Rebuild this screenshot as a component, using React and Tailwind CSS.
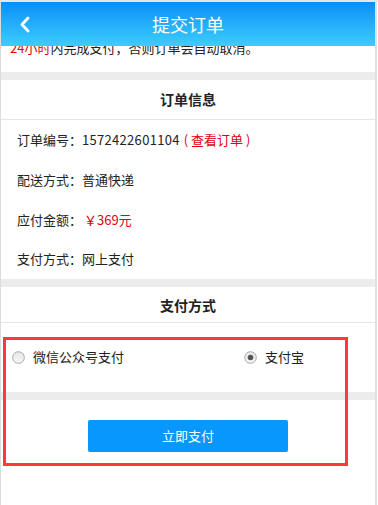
import React from "react";

const font = { fontFamily: '"Noto Sans CJK SC", "Noto Sans", sans-serif' };

function Radio({ checked }) {
  return (
    <svg width="13" height="13" viewBox="0 0 13 13" className="shrink-0">
      <defs>
        <linearGradient id={checked ? "rg1" : "rg0"} x1="0" y1="0" x2="0" y2="1">
          <stop offset="0" stopColor="#e6e6e6" />
          <stop offset="1" stopColor="#f8f8f8" />
        </linearGradient>
      </defs>
      <circle cx="6.5" cy="6.5" r="5.8" fill={`url(#${checked ? "rg1" : "rg0"})`} stroke="#a8a8a8" strokeWidth="1" />
      {checked && <circle cx="6.5" cy="6.5" r="2.8" fill="#555" />}
    </svg>
  );
}

export default function App() {
  return (
    <div
      className="relative w-[378px] h-[505px] overflow-hidden bg-white text-[13px] text-[#222]"
      style={font}
    >
      <div className="h-[2px] bg-[#e6e6e6]" />
      <div className="flex h-[503px] border-l border-[#dcdcdc]">
        <div className="flex-1 flex flex-col">
          {/* header */}
          <div className="relative h-[44px] flex items-center justify-center bg-gradient-to-b from-[#0a8ef6] to-[#3ccdfd]">
            <svg
              className="absolute left-[18px] top-[14px]"
              width="12"
              height="17"
              viewBox="0 0 12 17"
            >
              <polyline
                points="9,2 3,8.5 9,15"
                fill="none"
                stroke="#fff"
                strokeWidth="2.8"
                strokeLinecap="round"
                strokeLinejoin="round"
              />
            </svg>
            <span className="text-white text-[18px]">提交订单</span>
          </div>
          {/* notice (scrolled under header) */}
          <div className="h-[26px] overflow-hidden">
            <div className="mt-[-8px] pl-[9px] leading-[20px] whitespace-nowrap">
              <span className="text-[#e00010]">24小时</span>内完成支付，否则订单会自动取消。
            </div>
          </div>
          <div className="h-[8px] bg-[#ececec]" />
          {/* order info */}
          <div className="h-[40px] flex items-center justify-center font-bold text-[14px] border-b border-[#e6e6e6]">
            订单信息
          </div>
          <div className="flex flex-col pl-[16px]">
            <div className="h-[39.75px] flex items-center">
              订单编号：<span className="tracking-[0.3px]">1572422601104</span>
              <span className="text-[#e00010] ml-[4px]">(&nbsp;查看订单&nbsp;)</span>
            </div>
            <div className="h-[39.75px] flex items-center">配送方式：普通快递</div>
            <div className="h-[39.75px] flex items-center">
              应付金额：<span className="text-[#e00010] ml-[2px]">￥369元</span>
            </div>
            <div className="h-[39.75px] flex items-center">支付方式：网上支付</div>
          </div>
          <div className="h-[8px] bg-[#ececec]" />
          {/* pay method */}
          <div className="h-[36px] pt-[2px] flex items-center justify-center font-bold text-[14px] border-b border-[#e6e6e6]">
            支付方式
          </div>
          <div className="h-[69px] flex items-start pt-[24px]">
            <div className="flex items-center h-[20px] pl-[11px] w-[243px]">
              <Radio />
              <span className="ml-[8px]">微信公众号支付</span>
            </div>
            <div className="flex items-center h-[20px]">
              <Radio checked />
              <span className="ml-[8px]">支付宝</span>
            </div>
          </div>
          <div className="h-[8px] bg-[#ececec]" />
          <div className="flex justify-center pt-[20px]">
            <button className="w-[200px] h-[32px] rounded-[2px] bg-[#0797fd] text-white text-[13px] flex items-center justify-center">
              立即支付
            </button>
          </div>
        </div>
        <div className="w-[2px] bg-[#e0e0e0]" />
        <div className="w-[1px] bg-white" />
      </div>
      {/* annotation rectangle */}
      <div className="absolute left-[3px] top-[337px] w-[345px] h-[129px] border-[3px] border-[#fe3a3a]" />
    </div>
  );
}
